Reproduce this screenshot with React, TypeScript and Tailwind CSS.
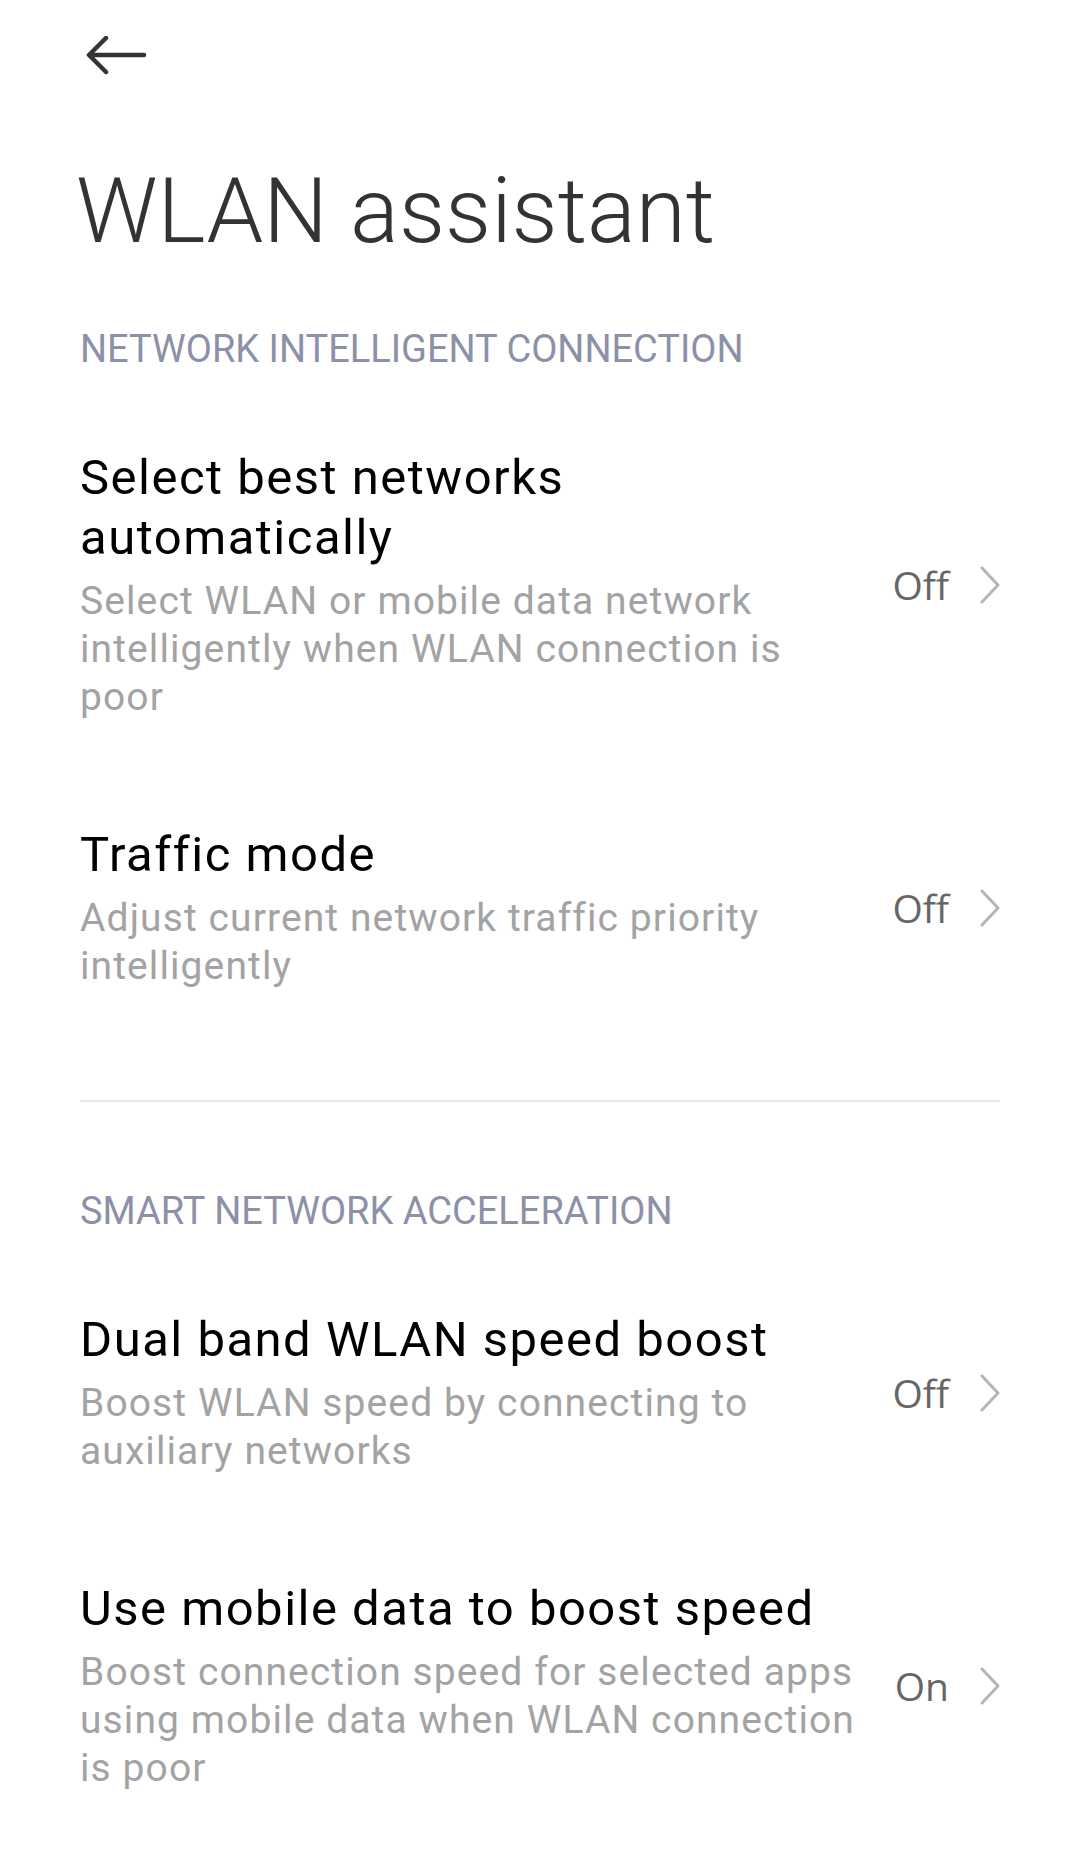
import React from "react";

type Item = {
  title: string;
  desc: string;
  value: string;
};

const sections: { label: string; items: Item[] }[] = [
  {
    label: "NETWORK INTELLIGENT CONNECTION",
    items: [
      {
        title: "Select best networks automatically",
        desc: "Select WLAN or mobile data network intelligently when WLAN connection is poor",
        value: "Off",
      },
      {
        title: "Traffic mode",
        desc: "Adjust current network traffic priority intelligently",
        value: "Off",
      },
    ],
  },
  {
    label: "SMART NETWORK ACCELERATION",
    items: [
      {
        title: "Dual band WLAN speed boost",
        desc: "Boost WLAN speed by connecting to auxiliary networks",
        value: "Off",
      },
      {
        title: "Use mobile data to boost speed",
        desc: "Boost connection speed for selected apps using mobile data when WLAN connection is poor",
        value: "On",
      },
    ],
  },
];

function Chevron() {
  return (
    <svg width="20" height="38" viewBox="0 0 20 38" fill="none">
      <path
        d="M2 2 L18 19 L2 36"
        stroke="#b5b5b5"
        strokeWidth="3"
        strokeLinecap="round"
        strokeLinejoin="round"
      />
    </svg>
  );
}

function Row({ item }: { item: Item }) {
  return (
    <div className="flex items-center gap-[24px] py-[52px]">
      <div className="flex-1 min-w-0">
        <div className="text-[49px] leading-[60px] tracking-[1.5px] text-black">{item.title}</div>
        <div className="mt-[9px] text-[39px] leading-[48px] tracking-[1.1px] text-[#a3a3a3]">
          {item.desc}
        </div>
      </div>
      <div className="flex items-center gap-[31px] shrink-0">
        <span className="font-['Open_Sans',sans-serif] text-[39px] leading-none text-[#666666]">
          {item.value}
        </span>
        <Chevron />
      </div>
    </div>
  );
}

export default function App() {
  return (
    <div className="w-[1080px] min-h-[1849px] bg-white font-['Roboto',sans-serif]">
      <div className="h-[156px] pt-[36px] pl-[86px]">
        <svg width="62" height="40" viewBox="0 0 62 40" fill="none">
          <path
            d="M58 19 H4 M20 2 L3 19 L20 36"
            stroke="#333333"
            strokeWidth="4.5"
            strokeLinecap="round"
            strokeLinejoin="round"
          />
        </svg>
      </div>

      <div className="px-[80px]">
        <h1 className="text-[91px] leading-[110px] font-light text-[#333333] -ml-[4px]">
          WLAN assistant
        </h1>

        {sections.map((section, i) => (
          <div key={section.label}>
            {i > 0 && <div className="mt-[58px] border-t-2 border-[#e8e8e8]" />}
            <div
              className={
                i === 0
                  ? "mt-[58px] text-[38px] leading-[50px] text-[#8c91a8]"
                  : "mt-[84px] text-[38px] leading-[50px] text-[#8c91a8]"
              }
            >
              {section.label}
            </div>
            <div className="mt-[22px]">
              {section.items.map((item) => (
                <Row key={item.title} item={item} />
              ))}
            </div>
          </div>
        ))}
      </div>
    </div>
  );
}
